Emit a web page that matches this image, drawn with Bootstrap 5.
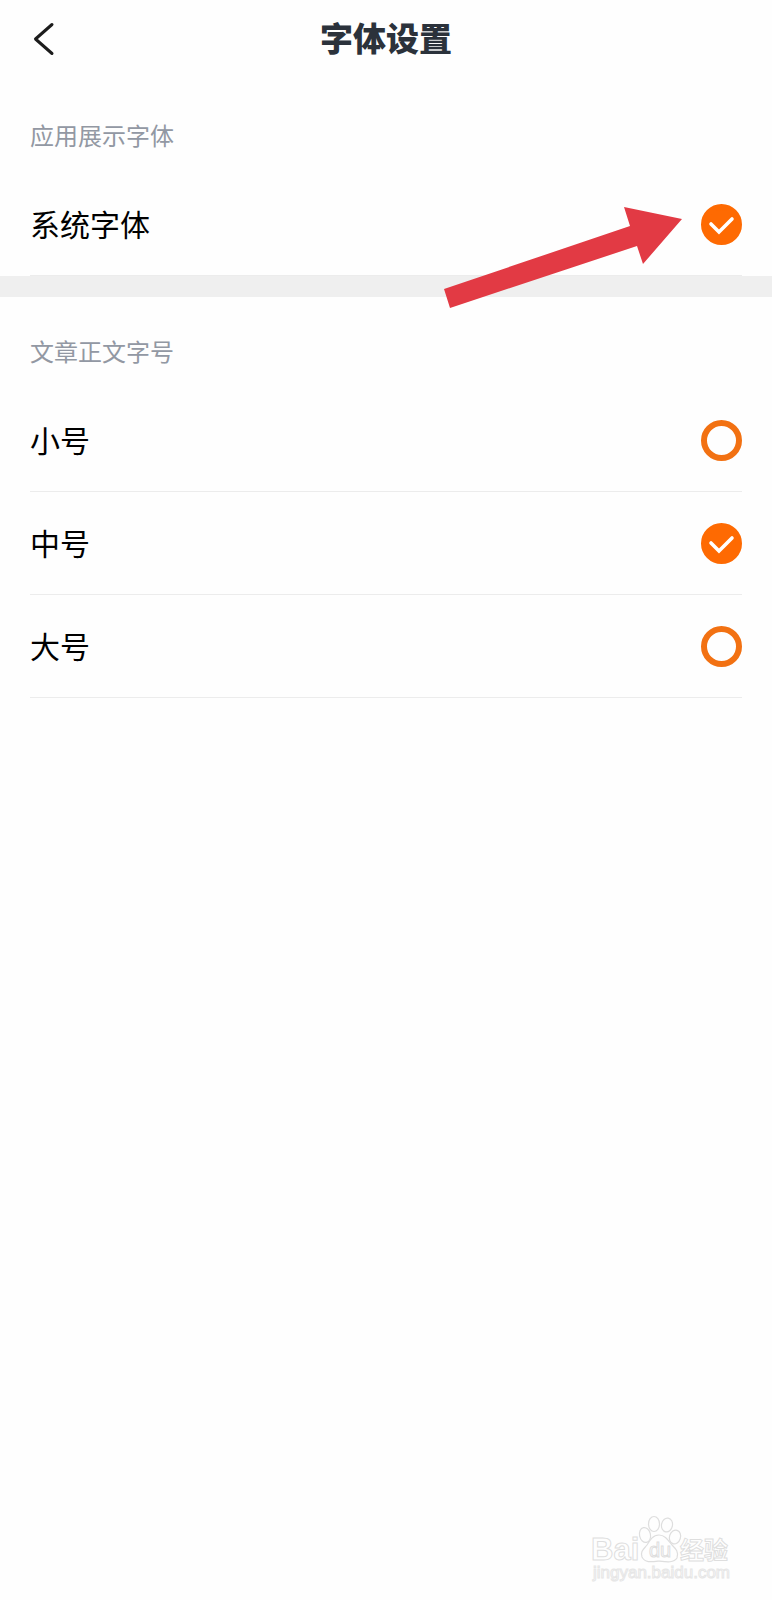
<!DOCTYPE html>
<html lang="zh-CN">
<head>
<meta charset="utf-8">
<meta name="viewport" content="width=device-width, initial-scale=1">
<title>字体设置</title>
<link href="https://cdn.jsdelivr.net/npm/bootstrap@5.3.0/dist/css/bootstrap.min.css" rel="stylesheet">
<style>
  body { font-family: "Noto Sans CJK SC", sans-serif; background: #fefefe; color: #000; }
  .topbar { height: 81px; padding-bottom: 3px; }
  .topbar h1 { font-size: 33px; line-height: 48px; padding-bottom: 4px; font-weight: 900; color: #2b323b; }
  .back-btn { left: 30px; color: #1c1c1c; line-height: 0; }
  .group-label { font-size: 24px; line-height: 36px; color: #9298a3; padding: 36px 30px 20px; }
  .option { height: 103px; margin: 0 30px; border-bottom: 1px solid #ececec; font-size: 30px; line-height: 44px; }
  .option label { padding-bottom: 2px; }
  .option .form-check-input { width: 41px; height: 41px; border: 6px solid #f27112; background-color: #fefefe; box-shadow: none; }
  .option .form-check-input:checked {
    border-color: #fe6a02; background-color: #fe6a02; background-origin: border-box; background-size: 41px 41px;
    background-image: url("data:image/svg+xml,%3Csvg xmlns='http://www.w3.org/2000/svg' viewBox='0 0 41 41'%3E%3Cpath d='M10 20l8 8 13-13' fill='none' stroke='%23fff' stroke-width='3.6' stroke-linecap='round' stroke-linejoin='miter'/%3E%3C/svg%3E");
  }
  .divider-band { height: 21px; background: #efefef; }
  .pointer { right: 60px; top: 34px; pointer-events: none; }
  .watermark { padding: 0 36px 12px; }
  .watermark text { fill: #fefefe; stroke: #dedede; stroke-width: 1px; font-family: "Liberation Sans", "Noto Sans CJK SC", sans-serif; }
  .watermark .site-url { stroke: #e6e6e6; }
</style>
</head>
<body class="d-flex flex-column min-vh-100">
<header class="topbar position-relative d-flex align-items-center justify-content-center">
  <button type="button" class="back-btn btn p-0 border-0 position-absolute" aria-label="返回">
    <svg width="26" height="36" viewBox="0 0 26 36" fill="none" stroke="currentColor" stroke-width="3" stroke-linecap="round" stroke-linejoin="round"><path d="M22 3.500L5.500 18L22 32.500"/></svg>
  </button>
  <h1 class="mb-0">字体设置</h1>
</header>
<main>
  <section>
    <h2 class="group-label m-0 fw-normal">应用展示字体</h2>
    <div class="option position-relative d-flex align-items-center justify-content-between">
      <label for="font-system">系统字体</label>
      <input class="form-check-input m-0" type="radio" name="font" id="font-system" checked>
      <svg class="pointer position-absolute z-1" width="238" height="101" viewBox="0 0 238 101" aria-hidden="true"><path fill="#e23a44" d="M0 82L186 19L180 0L238 12L199 57L193 39L6 101Z"/></svg>
    </div>
  </section>
  <div class="divider-band"></div>
  <section>
    <h2 class="group-label m-0 fw-normal">文章正文字号</h2>
    <div class="option d-flex align-items-center justify-content-between">
      <label for="size-s">小号</label>
      <input class="form-check-input m-0" type="radio" name="size" id="size-s">
    </div>
    <div class="option d-flex align-items-center justify-content-between">
      <label for="size-m">中号</label>
      <input class="form-check-input m-0" type="radio" name="size" id="size-m" checked>
    </div>
    <div class="option d-flex align-items-center justify-content-between">
      <label for="size-l">大号</label>
      <input class="form-check-input m-0" type="radio" name="size" id="size-l">
    </div>
  </section>
</main>
<footer class="watermark d-flex justify-content-end mt-auto">
  <svg width="146" height="74" viewBox="0 0 146 74">
    <g fill="#fefefe" stroke="#dedede" stroke-width="1.200">
      <ellipse cx="55" cy="21" rx="5.500" ry="7.500" transform="rotate(-12 55 21)"/>
      <ellipse cx="64" cy="10" rx="5.500" ry="7.500"/>
      <ellipse cx="77" cy="11" rx="5.500" ry="7" transform="rotate(10 77 11)"/>
      <ellipse cx="85" cy="23" rx="5.500" ry="7" transform="rotate(18 85 23)"/>
      <path d="M69 21C63 21 60 26 57 31C54 35 50 37 52 43C55 49 61 48 69 47C77 48 84 49 87 44C89 38 86 35 82 31C78 26 75 21 69 21Z"/>
    </g>
    <text x="1" y="46" font-size="31" font-weight="700">Bai</text>
    <text x="59" y="43" font-size="20">du</text>
    <text x="90" y="45" font-size="24" font-weight="700">经验</text>
    <text class="site-url" x="3" y="64" font-size="17">jingyan.baidu.com</text>
  </svg>
</footer>
<script src="https://cdn.jsdelivr.net/npm/bootstrap@5.3.0/dist/js/bootstrap.bundle.min.js"></script>
</body>
</html>
